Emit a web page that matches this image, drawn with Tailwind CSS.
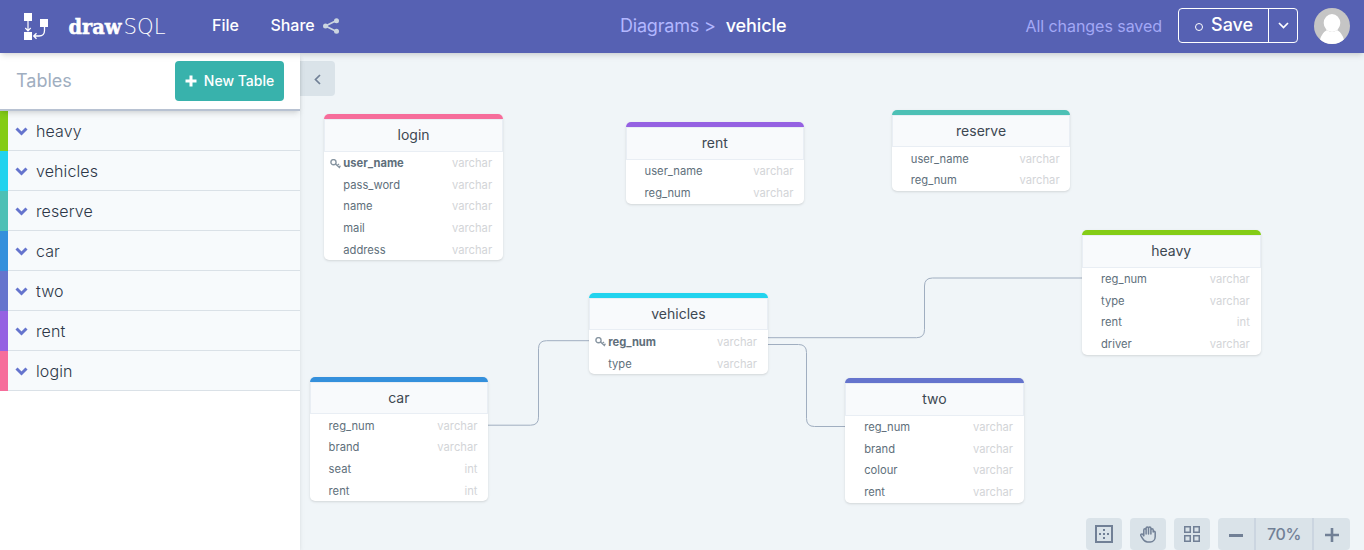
<!DOCTYPE html>
<html lang="en">
<head>
<meta charset="utf-8">
<title>drawSQL - vehicle</title>
<script src="https://cdn.jsdelivr.net/npm/@tailwindcss/browser@4"></script>
</head>
<body class="h-[550px] w-[1364px] overflow-hidden bg-[#f0f5f8] font-['Inter',sans-serif] flex flex-col">

<header class="relative z-20 flex h-[53px] shrink-0 items-center bg-[#5661b3] text-white shadow-md">
  <svg class="ml-6 h-[27px] w-[25px] shrink-0" viewBox="0 0 25 27" fill="none" stroke="#fff">
    <path d="M0 0h8v8H0zM0 19h8v8H0zM16 6h8v8h-8z" fill="#fff" stroke="none"/>
    <path d="M4 8v9.5M1.3 15 4 17.8 6.700 15" stroke-width="1.2"/>
    <path d="M20.500 14v3.500q0 5.500-5.500 5.500H10M12.500 20.200 9.700 23l2.800 2.800" stroke-width="1.300"/>
  </svg>
  <svg class="ml-[19px] h-[30px] w-[100px] shrink-0 overflow-visible" viewBox="0 0 100 30" fill="#fff">
    <text x="0.500" y="21.500" font-family="DejaVu Serif" font-weight="700" font-size="20.500" stroke="#fff" stroke-width="0.500" textLength="53" lengthAdjust="spacingAndGlyphs">draw</text>
    <text x="55.500" y="21.500" font-family="DejaVu Sans" font-weight="200" font-size="22" textLength="42" lengthAdjust="spacingAndGlyphs">SQL</text>
  </svg>
  <nav class="ml-11 flex w-[160px] items-center pb-[3px] text-base font-medium">
    <span>File</span>
    <span class="ml-[31.500px]">Share</span>
    <svg class="ml-2 mt-px h-4 w-4 shrink-0" viewBox="0 0 16 16" fill="#cbd5e0"><path d="M13.500 2.500 2.500 8l11 5.500" fill="none" stroke="#cbd5e0" stroke-width="1.700"/><circle cx="13.500" cy="2.700" r="2.500"/><circle cx="2.500" cy="8" r="2.500"/><circle cx="13.500" cy="13.300" r="2.500"/></svg>
  </nav>
  <div class="ml-[248px] flex w-[200px] items-center gap-[10px] pb-[2px] text-[18px]">
    <span class="whitespace-nowrap tracking-[-0.200px] text-[#b2b7ff]">Diagrams &gt;</span><span class="font-medium tracking-[-0.100px]">vehicle</span>
  </div>
  <span class="ml-auto mr-4 whitespace-nowrap pb-[2px] text-base tracking-[-0.050px] text-[#a3a8f6]">All changes saved</span>
  <div class="mb-[2px] mr-4 flex h-[35px] w-[120px] shrink-0 rounded-[4px] border border-white">
    <div class="flex grow items-center gap-[8px] border-r border-white pl-4">
      <span class="mt-[2px] h-2 w-2 rounded-full border border-white"></span>
      <span class="pb-[2px] text-[18px] font-medium">Save</span>
    </div>
    <div class="flex w-[28px] items-center justify-center">
      <svg class="h-[7px] w-[11px]" viewBox="0 0 11 7" fill="none" stroke="#fff" stroke-width="1.700"><path d="m1 1 4.500 4.500L10 1"/></svg>
    </div>
  </div>
  <svg class="mb-[1px] mr-[14px] h-9 w-9 shrink-0 rounded-full" viewBox="0 0 36 36"><rect width="36" height="36" fill="#c5c5c5"/><ellipse cx="18" cy="15" rx="8.300" ry="9" fill="#fff"/><path d="M5 36c1-7 4-12 8-14 3 2.500 7 2.500 10 0 4 2 7 7 8 14z" fill="#fff"/></svg>
</header>

<div class="flex min-h-0 grow">
  <aside class="z-10 flex w-[300px] shrink-0 flex-col bg-white shadow-md">
    <div class="relative z-10 flex h-[58px] shrink-0 items-center justify-between border-b-2 border-[#b8c2d2] pl-4 pr-4 shadow-md">
      <span class="pb-px text-[18px] text-[#a0aec0]">Tables</span>
      <button class="flex h-10 w-[109px] items-center justify-center gap-[7px] whitespace-nowrap rounded-[4px] bg-[#38b2ac] text-sm font-medium text-white">
        <svg class="h-3 w-3" viewBox="0 0 12 12"><path d="M6 .500v11M.500 6h11" stroke="#fff" stroke-width="3"/></svg>New Table</button>
    </div>
    <ul id="list" class="flex flex-col"></ul>
  </aside>

  <main class="relative grow overflow-hidden">
    <button class="absolute left-0 top-2 flex h-[35px] w-[35px] items-center justify-center rounded-r-[4px] bg-[#dae3e9]">
      <svg class="mt-px h-[11px] w-[7px]" viewBox="0 0 7 11" fill="none" stroke="#718096" stroke-width="1.700"><path d="M6 1 1.500 5.500 6 10"/></svg>
    </button>
    <svg class="absolute left-0 top-0 h-[497px] w-[1064px]" viewBox="300 53 1064 497" fill="none" stroke="#a0aec0" stroke-width="1">
      <path d="M488 425.200h42.500q8 0 8-8V348.700q0-8 8-8H590"/>
      <path d="M768 337.700H916.500q8 0 8-8V286q0-8 8-8H1082"/>
      <path d="M768 344.500h30.500q8 0 8 8v66q0 8 8 8H845"/>
    </svg>
    <div id="canvas"></div>

    <div class="absolute left-[786px] top-[465px] flex gap-2 text-[#718096]">
      <button class="flex h-8 w-9 items-center justify-center rounded-[4px] bg-[#dae3e9]">
        <svg class="h-[18px] w-[18px]" viewBox="0 0 18 18" fill="none" stroke="currentColor" stroke-width="2"><path d="M1 1h16v16H1z"/><path d="M8 5h2M8 9h2M8 13h2M4 9h2M12 9h2"/></svg>
      </button>
      <button class="flex h-8 w-9 items-center justify-center rounded-[4px] bg-[#dae3e9]">
        <svg class="mr-px h-[17px] w-[16px]" viewBox="0 0 16 17" fill="none" stroke="currentColor" stroke-width="1.500" stroke-linejoin="round" stroke-linecap="round"><path d="M3.800 9.800V4.100c0-1.700 2.300-1.700 2.300 0V8V2.300c0-1.900 2.400-1.900 2.400 0V8V2.300c0-1.900 2.400-1.900 2.400 0V8V4c0-1.600 2.300-1.600 2.300 0V6c0-1 2-1 2 .5V10.500c0 3-2 5.500-5 5.500H7.500C5 16 3.500 14 2.500 12.300L1 9.800C.2 8.300 2 7.300 3 8.500z"/></svg>
      </button>
      <button class="flex h-8 w-9 items-center justify-center rounded-[4px] bg-[#dae3e9]">
        <svg class="h-4 w-4" viewBox="0 0 16 16" fill="none" stroke="currentColor" stroke-width="1.500"><path d="M.75.75h5.500v5.500H.75zM9.750.75h5.500v5.500h-5.500zM.75 9.750h5.500v5.500H.75zM9.750 9.750h5.500v5.500h-5.500z"/></svg>
      </button>
      <div class="flex h-8 w-[132px] overflow-hidden rounded-[4px] bg-[#dae3e9]">
        <div class="flex w-[38px] items-center justify-center border-r-2 border-[#cbd5e0]"><svg class="mt-[2px] h-[3px] w-[14px]" viewBox="0 0 14 3"><path d="M0 1.500h14" stroke="currentColor" stroke-width="3"/></svg></div>
        <div class="flex w-[58px] items-center justify-center border-r-2 border-[#cbd5e0] text-base font-medium tracking-[-0.300px]">70%</div>
        <div class="flex grow items-center justify-center"><svg class="mt-[2px] h-[14px] w-[14px]" viewBox="0 0 14 14"><path d="M0 7h14M7 0v14" stroke="currentColor" stroke-width="2.600"/></svg></div>
      </div>
    </div>
  </main>
</div>

<script>
const names = [['heavy','#84cc16'],['vehicles','#22d3ee'],['reserve','#4dc0b5'],['car','#3490dc'],['two','#6574cd'],['rent','#9561e2'],['login','#f66d9b']];
document.getElementById('list').innerHTML = names.map(([n, c]) => `
  <li class="flex h-10 bg-[#f7fafc]">
    <span class="w-2 shrink-0" style="background:${c}"></span>
    <div class="flex grow items-center border-b border-[#dae1e7] pl-[7px]">
      <svg class="mt-[2px] h-[9px] w-[13px]" viewBox="0 0 13 9" fill="none" stroke="#6574cd" stroke-width="3"><path d="m1.500 1.500 5 5 5-5"/></svg>
      <span class="ml-2 pt-px text-base font-light tracking-[0.100px] text-[#2d3748]">${n}</span>
    </div>
  </li>`).join('');

const key = '<svg class="h-[10px] w-[11px]" viewBox="0 0 11 10" fill="none" stroke="#8795a1" stroke-width="1.400"><circle cx="3.500" cy="3.200" r="2.600"/><path d="M5.500 5 10 9M7.300 6.500 9 5M9 8.200 10.500 6.800"/></svg>';
const tables = [
  ['login','#f66d9b',324.300,114,[['user_name','varchar',1],['pass_word','varchar'],['name','varchar'],['mail','varchar'],['address','varchar']]],
  ['rent','#9561e2',625.600,122,[['user_name','varchar'],['reg_num','varchar']]],
  ['reserve','#4dc0b5',891.800,109.600,[['user_name','varchar'],['reg_num','varchar']]],
  ['heavy','#84cc16',1082,230,[['reg_num','varchar'],['type','varchar'],['rent','int'],['driver','varchar']]],
  ['vehicles','#22d3ee',589.200,292.700,[['reg_num','varchar',1],['type','varchar']]],
  ['car','#3490dc',309.600,376.600,[['reg_num','varchar'],['brand','varchar'],['seat','int'],['rent','int']]],
  ['two','#6574cd',845.200,378,[['reg_num','varchar'],['brand','varchar'],['colour','varchar'],['rent','varchar']]]
];
document.getElementById('canvas').innerHTML = tables.map(([n, c, x, y, rows]) => `
  <section class="absolute w-[178.500px] overflow-hidden rounded-[5px] bg-white shadow" style="left:${x - 300}px;top:${y - 53}px">
    <div class="h-[5px]" style="background:${c}"></div>
    <h2 class="flex h-[32.500px] items-center justify-center border border-[#e9eef4] bg-[#f8fafc] pb-[1.200px] text-[14px] text-[#3d4852]">${n}</h2>
    <div class="pt-px">${rows.map(([f, t, pk]) => `
      <div class="flex h-[21.600px] items-center pl-[6px] pr-[10.700px] pt-[0.800px] text-[11.200px]">
        <span class="w-[13px] shrink-0">${pk ? key : ''}</span>
        <span class="grow text-[#606f7b] ${pk ? 'font-bold' : ''}">${f}</span>
        <span class="text-[#d3d5d8]">${t}</span>
      </div>`).join('')}</div>
  </section>`).join('');
</script>
</body>
</html>
